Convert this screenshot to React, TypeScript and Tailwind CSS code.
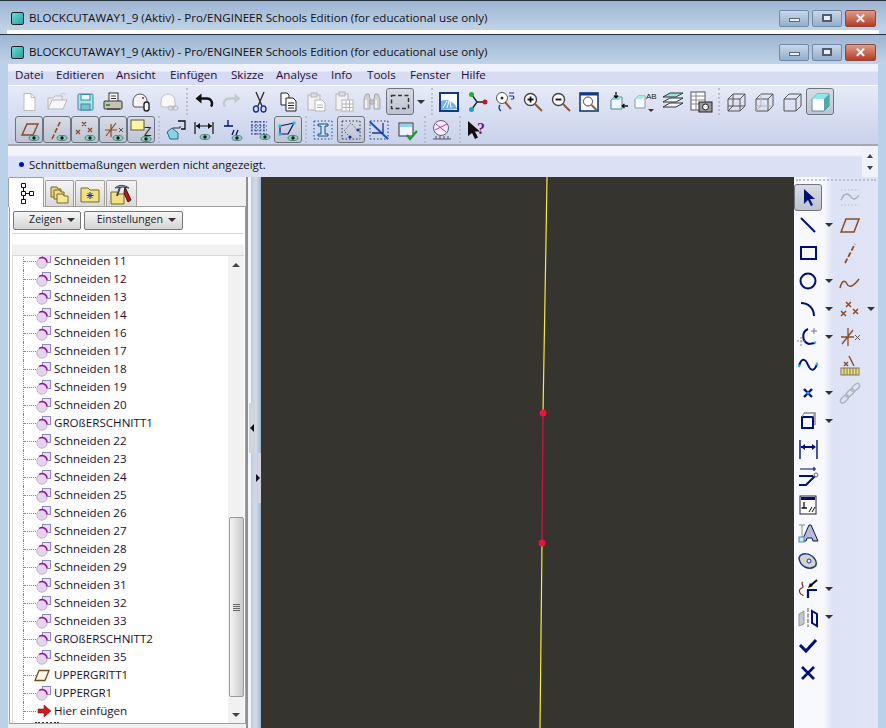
import React from 'react';

const BROWN = '#8a4b24';
const NAVY = '#00107a';

const Ic: React.FC<{ children: React.ReactNode; size?: number }> = ({ children, size = 24 }) => (
  <svg width={size} height={size} viewBox={`0 0 ${size} ${size}`} fill="none" className="block">
    {children}
  </svg>
);

const Eye = ({ x = 17, y = 20 }: { x?: number; y?: number }) => (
  <g>
    <ellipse cx={x} cy={y} rx={5} ry={2.6} fill="#8fcfc0" stroke="#1d5a50" strokeWidth={0.6} />
    <circle cx={x} cy={y} r={1.7} fill="#101a18" />
  </g>
);

const Btn: React.FC<{ children: React.ReactNode; on?: boolean }> = ({ children, on }) => (
  <div
    className={
      'flex h-[27px] w-[28px] shrink-0 items-center justify-center rounded-[3px] ' +
      (on ? 'border border-[#6d7480] bg-linear-to-b from-[#d9dce4] to-[#bcc3d2]' : '')
    }
  >
    {children}
  </div>
);

const Grip = () => (
  <div className="flex h-[27px] w-[7px] shrink-0 justify-center">
    <div className="h-full w-0 border-l-2 border-dotted border-[#b9bfcc]" />
  </div>
);

const Arrow = ({ className = '' }: { className?: string }) => (
  <div className={'h-0 w-0 border-x-[4px] border-t-[4px] border-x-transparent border-t-[#333] ' + className} />
);

/* top toolbar */
const row1a = [
  <Ic key="new"><path d="M7 3.5h7l4 4v13H7z" fill="#fff" stroke="#bdbdbd" /><path d="M14 3.5v4h4" stroke="#bdbdbd" /></Ic>,
  <Ic key="open"><path d="M3 19V8h5l2-2h7v4" fill="#eee" stroke="#b8b8b8" /><path d="M3 19l4-9h15l-4 9z" fill="#f7f7f7" stroke="#b8b8b8" /><path d="M15 5c2-2 4-2 6 0" stroke="#c8c8c8" /></Ic>,
  <Ic key="save"><rect x="5" y="4" width="15" height="16" rx="1" fill="#a9e4e8" stroke="#3d8a9c" /><rect x="8" y="4.5" width="9" height="5.5" fill="#e4f8f8" stroke="#3d8a9c" /><rect x="8" y="14" width="9" height="6" fill="#7cc5d0" stroke="#3d8a9c" /></Ic>,
  <Ic key="print"><rect x="8" y="3" width="9" height="9" fill="#fff" stroke="#333" /><path d="M10 6h5M10 8.5h5" stroke="#333" /><rect x="3" y="11" width="18" height="8" rx="1" fill="#c7c2b6" stroke="#333" /><rect x="5" y="14" width="4" height="2" fill="#27a12b" /><rect x="6" y="18" width="13" height="2" fill="#555" /></Ic>,
  <Ic key="mail"><path d="M4 11a7 7 0 0 1 14 0v6H6a2 2 0 0 1-2-2z" fill="#f4f4f4" stroke="#555" /><circle cx="14" cy="8" r="1" fill="#b02020" /><rect x="15" y="12" width="5" height="9" rx="2.5" fill="#fff" stroke="#222" strokeWidth="1.4" /></Ic>,
  <Ic key="link"><path d="M4 11a7 7 0 0 1 14 0v6H6a2 2 0 0 1-2-2z" fill="#f8f8f8" stroke="#c0c0c0" /><rect x="11" y="16" width="6" height="4" rx="2" stroke="#b8b8b8" /><rect x="15" y="16" width="6" height="4" rx="2" stroke="#b8b8b8" /></Ic>,
];

const row1b = [
  <Ic key="undo"><path d="M6 8.5h9a5 5 0 0 1 4 8" stroke="#111" strokeWidth="2.4" /><path d="M9.5 3.5L3.5 8.5l6 5z" fill="#111" /></Ic>,
  <Ic key="redo"><path d="M18 8.5H9a5 5 0 0 0-4 8" stroke="#c4c8cf" strokeWidth="2.4" /><path d="M14.5 3.5l6 5-6 5z" fill="#c4c8cf" /></Ic>,
  <Ic key="cut"><path d="M8 2l6 14M16 2l-6 14" stroke="#333" strokeWidth="1.4" /><ellipse cx="8" cy="19" rx="2.5" ry="3" stroke="#1b2f8f" strokeWidth="1.4" /><ellipse cx="15.5" cy="19" rx="2.5" ry="3" stroke="#1b2f8f" strokeWidth="1.4" /></Ic>,
  <Ic key="copy"><path d="M5 3h6l2 2v10H5z" fill="#fff" stroke="#222" /><path d="M10 8h7l3 3v10H10z" fill="#fff" stroke="#222" /><path d="M12 13h6M12 15.5h6M12 18h6" stroke="#222" /></Ic>,
  <Ic key="paste"><rect x="4" y="5" width="12" height="15" fill="#f2f2f2" stroke="#b5b5b5" /><rect x="7" y="3" width="6" height="4" fill="#ddd" stroke="#b5b5b5" /><path d="M11 10h7l3 3v8H11z" fill="#fff" stroke="#b5b5b5" /><path d="M13 15h6M13 17.5h6" stroke="#b5b5b5" /></Ic>,
  <Ic key="pastes"><rect x="4" y="4" width="12" height="16" fill="#f2f2f2" stroke="#b5b5b5" /><rect x="7" y="2" width="6" height="4" fill="#ddd" stroke="#b5b5b5" /><rect x="10" y="10" width="11" height="11" fill="#fff" stroke="#b5b5b5" /><path d="M10 14h11M10 17.5h11M14 10v11M17.5 10v11" stroke="#b5b5b5" /></Ic>,
  <Ic key="bino"><path d="M4 9l2-5h3l1 5v10H4zM14 9l1-5h3l2 5v10h-6z" fill="#d0d0d0" stroke="#a8a8a8" /><path d="M10 10h4v4h-4z" fill="#c8c8c8" stroke="#a8a8a8" /><path d="M6 10v8M16 10v8" stroke="#fff" strokeWidth="1.5" /></Ic>,
];

const row1c = [
  <Ic key="named"><rect x="3" y="3" width="18" height="18" fill="#fff" stroke="#123a80" strokeWidth="2" /><path d="M4 20V11a12 12 0 0 1 16 8z" fill="#6fb4e8" /><path d="M6 18l4-7M10 18l2-7M14 18l-1-7" stroke="#fff" /></Ic>,
  <Ic key="axes"><path d="M12 12L7 5M12 12L7 19M12 12h8" stroke="#222" strokeWidth="1.3" /><circle cx="6.5" cy="4.5" r="2.5" fill="#20b030" /><circle cx="6.5" cy="19.5" r="2.5" fill="#20a0c8" /><circle cx="20" cy="12" r="2.5" fill="#b81c2c" /></Ic>,
  <Ic key="spin"><circle cx="9" cy="8" r="5.5" fill="#fff" stroke="#555" /><circle cx="9" cy="8" r="1.5" fill="#333" /><path d="M12 12l6 7" stroke="#8a5a30" strokeWidth="2" /><path d="M16 3h5M16 6h4c1 0 1 3 0 3h-2" stroke="#1c3aa0" strokeWidth="1.2" /><path d="M7 15a4 4 0 0 0 1 6" stroke="#1c3aa0" strokeWidth="1.4" /></Ic>,
  <Ic key="zin"><circle cx="9.5" cy="9.5" r="6" fill="#fff" stroke="#444" strokeWidth="1.4" /><path d="M6.5 9.5h6M9.5 6.5v6" stroke="#111" strokeWidth="1.8" /><path d="M14 14l7 7" stroke="#8a5a30" strokeWidth="2" /></Ic>,
  <Ic key="zout"><circle cx="9.5" cy="9.5" r="6" fill="#fff" stroke="#444" strokeWidth="1.4" /><path d="M6.5 9.5h6" stroke="#111" strokeWidth="1.8" /><path d="M14 14l7 7" stroke="#8a5a30" strokeWidth="2" /></Ic>,
  <Ic key="refit"><rect x="3" y="3" width="18" height="18" fill="#fff" stroke="#123a80" strokeWidth="1.6" /><rect x="3" y="3" width="18" height="2.5" fill="#123a80" /><circle cx="11" cy="11.5" r="4.5" fill="#fff" stroke="#444" /><path d="M14.5 15l5 5" stroke="#8a5a30" strokeWidth="2" /></Ic>,
  <Ic key="orient"><path d="M6 10l3-3h8v12H6z" fill="#eef8fb" stroke="#5b7f8a" /><path d="M6 10l3-3h8l-3 3z" fill="#7fe0e0" /><path d="M11 2v6M11 8l-2-2.5M11 8l2-2.5M23 16h-6M17 16l2.5-2M17 16l2.5 2" stroke="#111" strokeWidth="1.3" /></Ic>,
  <Ic key="views"><path d="M2 9l3-3h7v12H2z" fill="#f2fafb" stroke="#8a9aa0" /><path d="M2 9l3-3h7l-3 3z" fill="#a4ecec" /><text x="13" y="9" fontSize="8" fill="#222" fontFamily="Liberation Sans, sans-serif">AB</text><path d="M15 19h6l-3 3z" fill="#333" /></Ic>,
  <Ic key="layers"><path d="M2 7l7-4h13l-7 4z" fill="#8ee8e0" stroke="#333" /><path d="M2 12l7-4h13l-7 4z" fill="#f4fafa" stroke="#333" /><path d="M2 17l7-4h13l-7 4z" fill="#f4fafa" stroke="#333" /></Ic>,
  <Ic key="cam"><rect x="2" y="2" width="14" height="18" fill="#fff" stroke="#555" /><path d="M2 6h14M2 10h14M2 14h14M7 2v18" stroke="#888" /><rect x="10" y="12" width="13" height="10" fill="#999" stroke="#222" /><circle cx="16.5" cy="17" r="3" fill="#eee" stroke="#222" /></Ic>,
];

const Cube = ({ mode }: { mode: 'wire' | 'hidden' | 'nohidden' | 'shade' }) => (
  <Ic>
    {mode === 'shade' ? (
      <>
        <path d="M4 9l5-5h12v12l-5 5H4z" fill="#fff" stroke="#5c8c98" />
        <path d="M4 9l5-5h12l-5 5z" fill="#8ce8ea" />
        <path d="M16 9l5-5v12l-5 5z" fill="#4fa9a4" />
      </>
    ) : (
      <>
        <path d="M4 9l5-5h12v12l-5 5H4zM4 9h12v12M16 9l5-5" stroke="#555" />
        {mode !== 'nohidden' && (
          <path d="M9 4v12H4M9 16h12M9 16l-5 5" stroke={mode === 'wire' ? '#555' : '#b5b5b5'} />
        )}
      </>
    )}
  </Ic>
);

/* sketcher row of the top toolbar */
const row2a = [
  <Ic key="pl"><path d="M5 17l5-11h11l-5 11z" stroke={BROWN} strokeWidth="1.4" /><Eye /></Ic>,
  <Ic key="ax"><path d="M7 21L15 4" stroke={BROWN} strokeWidth="1.6" strokeDasharray="5 2" /><Eye /></Ic>,
  <Ic key="pt"><path d="M9 4l4 4M13 4l-4 4M3 12l4 4M7 12l-4 4M15 10l4 4M19 10l-4 4" stroke={BROWN} strokeWidth="1.3" /><Eye /></Ic>,
  <Ic key="cs"><path d="M4 12h12M10 6v13M5 18l10-13" stroke={BROWN} strokeWidth="1.2" /><path d="M18 10l4 4M22 10l-4 4" stroke="#555" /><Eye /></Ic>,
  <Ic key="note"><rect x="2" y="2" width="13" height="10" fill="#fff59c" stroke="#555" /><text x="15" y="18" fontSize="12" fill="#222" fontFamily="Liberation Sans, sans-serif">Z</text><Eye y={21} /></Ic>,
];

const row2b = [
  <Ic key="rel"><path d="M4 14l5-4h7v-2" stroke="#333" /><path d="M14 3h7v8h-4" stroke="#111" strokeWidth="1.3" /><path d="M3 14l5-4 6 5v6H6z" fill="#8ad2e4" stroke="#28688a" /></Ic>,
  <Ic key="dim"><path d="M3 4v12M21 4v12M4 8h16" stroke="#111" strokeWidth="1.2" /><path d="M4 8l4-3v6zM20 8l-4-3v6z" fill="#111" /><Eye x={13} y={19} /></Ic>,
  <Ic key="con"><path d="M4 8h9M8 2v6" stroke={NAVY} strokeWidth="1.3" /><path d="M12 17l2-5M16 17l2-5" stroke={NAVY} strokeWidth="1.3" /><Eye x={17} y={20} /></Ic>,
  <Ic key="grid"><path d="M3 4h16M3 8h16M3 12h16M3 16h16M4 3v15M8 3v15M12 3v15M16 3v15" stroke="#1c3a88" strokeWidth="1.2" strokeDasharray="1.5 1.5" /><Eye x={17} y={19} /></Ic>,
  <Ic key="vert"><path d="M4 8l14-3-6 11H4z" stroke={NAVY} strokeWidth="1.2" /><path d="M2.5 6.5h3v3h-3zM16.5 3.5h3v3h-3zM2.5 14.5h3v3h-3z" fill="#22b8e8" /><Eye x={17} y={20} /></Ic>,
];

const dotBox = 'M3 3h18M3 21h18M3 3v18M21 3v18';

const row2c = [
  <Ic key="i"><path d={dotBox} stroke="#1c4a98" strokeDasharray="1.5 2" /><path d="M7 6h10v2h-3v8h3v2H7v-2h3V8H7z" fill="#c9e4f4" stroke="#1b4a80" /></Ic>,
  <Ic key="shp"><path d={dotBox} stroke="#1c3a88" strokeDasharray="1.5 2" /><path d="M5 13l7-8 7 8M6 14l6 6" stroke="#667" strokeDasharray="1.5 1.5" /><circle cx="19" cy="12" r="1.6" fill="#1c3a98" /><circle cx="11" cy="19" r="1.6" fill="#1c3a98" /></Ic>,
  <Ic key="ovl"><path d={dotBox} stroke="#1c3a88" strokeDasharray="1.5 2" /><path d="M3 4l18 17" stroke="#1a4fc0" strokeWidth="2" /><path d="M5 15h11V5" stroke="#1c3a88" strokeWidth="1.3" /></Ic>,
  <Ic key="chk"><rect x="4" y="5" width="14" height="13" fill="#eef6fb" stroke="#333" /><rect x="5" y="6" width="12" height="3" fill="#8fd4e6" /><path d="M12 17l3 4 7-8" stroke="#1c9a2c" strokeWidth="2.2" /></Ic>,
];

const section = (
  <Ic>
    <circle cx="11" cy="10" r="7.5" fill="#f7eef9" stroke="#5c5c80" />
    <path d="M6 6l10 8M5 12l12-6" stroke="#c030b0" />
    <path d="M3 21h18M6 18v3M10 18v3M14 18v3M18 18v3" stroke="#555" />
  </Ic>
);

const whatsThis = (
  <svg width="24" height="24" viewBox="0 0 24 24" className="block">
    <path d="M3 3v15l4-3 3 6 3-1.5-3-6h5z" fill="#111" />
    <text x="12" y="16" fontSize="16" fontWeight="700" fill="#7a1080" fontFamily="Liberation Serif, serif">?</text>
  </svg>
);

/* right sketch toolbar, first column */
const rightTools: { icon: React.ReactNode; on?: boolean; drop?: boolean }[] = [
  { icon: <Ic><path d="M8 4v15l4-4 3 6 2-1-3-6h5z" fill={NAVY} /></Ic>, on: true },
  { icon: <Ic><path d="M5 5l14 14" stroke={NAVY} strokeWidth="2" /></Ic>, drop: true },
  { icon: <Ic><rect x="5" y="6" width="15" height="12" stroke={NAVY} strokeWidth="2" /></Ic> },
  { icon: <Ic><circle cx="12" cy="12" r="7.5" stroke={NAVY} strokeWidth="2" /></Ic>, drop: true },
  { icon: <Ic><path d="M5 6c7 0 13 5 13 13" stroke={NAVY} strokeWidth="2" /></Ic>, drop: true },
  { icon: <Ic><path d="M12 4a8 8 0 0 0 1 15l6-1" stroke={NAVY} strokeWidth="2" /><path d="M18 3v6M15 6h6" stroke="#777" /><path d="M1 16h8M5 12v9" stroke="#888" strokeDasharray="2 1.5" /><circle cx="19" cy="17.5" r="1.3" fill="#18c8e8" /></Ic>, drop: true },
  { icon: <Ic><path d="M3 13c3-10 7-6 9-1s6 8 9-1" stroke={NAVY} strokeWidth="2" /><circle cx="3" cy="13" r="1.4" fill="#18c8e8" /><circle cx="21" cy="11" r="1.4" fill="#18c8e8" /></Ic> },
  { icon: <Ic><path d="M8 8l8 8M16 8l-8 8" stroke={NAVY} strokeWidth="2.4" /><circle cx="12" cy="12" r="1.6" fill="#18a8e8" /></Ic>, drop: true },
  { icon: <Ic><path d="M8 4h11v12" stroke="#888" strokeWidth="1.4" /><path d="M6 8h11v11H6z" stroke={NAVY} strokeWidth="2" fill="#f8f9fd" /><path d="M6 8l2-4M17 8l2-4" stroke="#888" /></Ic>, drop: true },
  { icon: <Ic><path d="M4 3v19M21 3v19" stroke={NAVY} strokeWidth="1.4" /><path d="M5 10h14" stroke={NAVY} strokeWidth="2" /><path d="M5 10l4-3v6zM20 10l-4-3v6z" fill={NAVY} /></Ic> },
  { icon: <Ic><path d="M4 4h16M18 2v4" stroke={NAVY} strokeWidth="1.2" /><path d="M3 11h14" stroke={NAVY} strokeWidth="2" /><path d="M3 20h7l9-9" stroke={NAVY} strokeWidth="2" /><circle cx="20" cy="10" r="2" stroke="#666" /></Ic> },
  { icon: <Ic><rect x="4" y="3" width="16" height="18" fill="#fff" stroke="#223" /><rect x="5" y="4" width="14" height="3" fill={NAVY} /><path d="M8 9v6M5.5 15H11" stroke="#111" strokeWidth="1.3" /><path d="M13 19l3-5M16 19l3-5" stroke="#111" /></Ic> },
  { icon: <Ic><path d="M3 4h6M6 4v12" stroke="#889" /><path d="M6 20L13 4h2l7 16h-5l-1-3h-5l-1 3z" fill="#b8bccc" stroke={NAVY} /><rect x="3" y="16" width="5" height="5" fill="#cfe8f4" stroke="#4a8ab8" /></Ic> },
  { icon: <Ic><path d="M3 9c2-6 11-5 15 0 3 3 3 8 0 9-5 3-14 0-15-9z" fill="#d4d4cc" stroke="#1c3a88" strokeWidth="1.5" /><circle cx="13" cy="12" r="2" fill="#eee" stroke="#1c3a88" /></Ic> },
  { icon: <Ic><path d="M7 5c-3 1 2 5-1 6s-3 3-2 5 3 1 3 3" stroke="#8a2a20" strokeWidth="1.2" /><path d="M12 21v-8h9" stroke={NAVY} strokeWidth="2.2" /><path d="M21 3l-7 6" stroke="#111" strokeWidth="2" /><path d="M12 11l5-2-3-3z" fill="#111" /></Ic>, drop: true },
  { icon: <Ic><path d="M3 9l5-3v13l-5 2z" fill="#c4c8cc" stroke="#999" /><path d="M12 3v19" stroke="#555" strokeDasharray="4 1.5" /><path d="M16 6l5 3v12l-5-3z" stroke={NAVY} strokeWidth="2" /></Ic>, drop: true },
  { icon: <Ic><path d="M4 12l6 6L20 7" stroke={NAVY} strokeWidth="3" /></Ic> },
  { icon: <Ic><path d="M6 6l12 12M18 6L6 18" stroke={NAVY} strokeWidth="2.6" /></Ic> },
];

/* right sketch toolbar, second column */
const rightTools2: { icon: React.ReactNode; drop?: boolean }[] = [
  { icon: <Ic><path d="M3 5h18M3 20h18" stroke="#b8bcc4" strokeDasharray="1.5 2" /><path d="M3 15c4-9 8-6 10-3s5 3 8-2" stroke="#a8acb4" strokeWidth="1.3" /></Ic> },
  { icon: <Ic><path d="M3 19L8 6h13l-5 13z" stroke={BROWN} strokeWidth="1.5" /></Ic> },
  { icon: <Ic><path d="M7 22L17 3" stroke={BROWN} strokeWidth="1.8" strokeDasharray="5 2" /></Ic> },
  { icon: <Ic><path d="M2 19c2-8 5-8 7-4s6 3 12-5" stroke={BROWN} strokeWidth="1.5" /></Ic> },
  { icon: <Ic><path d="M8 5l5 5M13 5l-5 5M3 14l5 5M8 14l-5 5M15 12l5 5M20 12l-5 5" stroke={BROWN} strokeWidth="1.5" /></Ic>, drop: true },
  { icon: <Ic><path d="M3 12h13M10 3v18M4 19L15 5" stroke={BROWN} strokeWidth="1.3" /><path d="M17 10l5 5M22 10l-5 5" stroke="#555" /></Ic> },
  { icon: <Ic><path d="M6 9l4 4M10 9l-4 4M11 3l5 10" stroke={BROWN} strokeWidth="1.4" /><rect x="3" y="15" width="18" height="7" fill="#f4e068" stroke="#777" /><path d="M6 15v7M9 15v7M12 15v7M15 15v7M18 15v7" stroke="#777" /></Ic> },
  { icon: <Ic><g stroke="#b0b4bc" strokeWidth="1.5"><ellipse cx="6.5" cy="18" rx="5" ry="2.6" transform="rotate(-45 6.5 18)" /><ellipse cx="12" cy="12" rx="5" ry="2.6" transform="rotate(-45 12 12)" /><ellipse cx="17.5" cy="6.5" rx="5" ry="2.6" transform="rotate(-45 17.5 6.5)" /></g></Ic> },
];

const RightRow: React.FC<{ children: React.ReactNode; on?: boolean; drop?: boolean }> = ({ children, on, drop }) => (
  <div className="flex h-[28px] items-center">
    <Btn on={on}>{children}</Btn>
    <div className="flex w-[14px] justify-center">{drop && <Arrow />}</div>
  </div>
);

const CutIcon = () => (
  <svg width="16" height="16" viewBox="0 0 16 16" fill="none" className="block shrink-0">
    <rect x="6.5" y="1.5" width="8" height="8" fill="#e6e2f4" stroke="#8f88c4" />
    <circle cx="6" cy="10" r="5.2" fill="#e4d4ee" stroke="#c4b0d8" />
    <path d="M3 5.5a5 5 0 0 1 8 4" stroke="#a010a0" strokeWidth="1.5" />
  </svg>
);

type TreeItem = { label: string; kind?: 'cut' | 'plane' | 'insert' };

const names: TreeItem[] = [
  ...[11, 12, 13, 14, 16, 17, 18, 19, 20].map((n) => ({ label: `Schneiden ${n}` })),
  { label: 'GROßERSCHNITT1' },
  ...[22, 23, 24, 25, 26, 27, 28, 29, 31, 32, 33].map((n) => ({ label: `Schneiden ${n}` })),
  { label: 'GROßERSCHNITT2' },
  { label: 'Schneiden 35' },
  { label: 'UPPERGRITT1', kind: 'plane' },
  { label: 'UPPERGR1' },
  { label: 'Hier einfügen', kind: 'insert' },
];

const TreeRow = ({ item }: { item: TreeItem }) => (
  <div className="ml-[10px] flex h-[18px] items-center border-l border-dotted border-[#888]">
    <div className="w-[12px] border-t border-dotted border-[#888]" />
    {item.kind === 'plane' ? (
      <svg width="16" height="16" viewBox="0 0 16 16" fill="none" className="block shrink-0 -ml-[2px] mr-[2px]">
        <path d="M1 13.5L5 3.5h10l-4 10z" fill="#fffbe8" stroke="#7a4a20" strokeWidth="1.3" />
      </svg>
    ) : item.kind === 'insert' ? (
      <svg width="16" height="16" viewBox="0 0 16 16" className="block shrink-0">
        <path d="M2 6h6V2l7 6-7 6v-4H2z" fill="#d81818" stroke="#501010" strokeWidth="0.5" />
      </svg>
    ) : (
      <CutIcon />
    )}
    <span className="ml-[2px] whitespace-nowrap text-[11.6px] leading-[10px] text-[#1a1030]">{item.label}</span>
  </div>
);

const WinButtons = () => (
  <div className="flex gap-[3px]">
    <div className="flex h-[17px] w-[30px] items-center justify-center rounded-[2px] border border-[#6f8aa8] bg-linear-to-b from-[#c8d8ea] to-[#93aecb]">
      <div className="mt-[3px] h-[4px] w-[11px] border border-[#5a6878] bg-[#e8eef4]" />
    </div>
    <div className="flex h-[17px] w-[30px] items-center justify-center rounded-[2px] border border-[#6f8aa8] bg-linear-to-b from-[#c8d8ea] to-[#93aecb]">
      <div className="h-[8px] w-[10px] border-2 border-[#4e5c6c] bg-[#e8eef4]" />
    </div>
    <div className="flex h-[17px] w-[31px] items-center justify-center rounded-[2px] border border-[#8a4a40] bg-linear-to-b from-[#dd9a88] to-[#b53a24]">
      <span className="text-[13px] leading-none font-bold text-white">✕</span>
    </div>
  </div>
);

const TitleText = () => (
  <>
    <div className="mr-[5px] ml-[11px] h-[13px] w-[13px] rounded-[2px] border border-[#222] bg-linear-to-br from-[#62dcd4] to-[#2f9f9a]" />
    <span className="flex-1 text-[11.6px] whitespace-nowrap text-[#111]">
      BLOCKCUTAWAY1_9 (Aktiv) - Pro/ENGINEER Schools Edition (for educational use only)
    </span>
    <div className="mr-[10px]">
      <WinButtons />
    </div>
  </>
);

const menus = [
  ['Datei', 'w-[41px]'],
  ['Editieren', 'w-[60px]'],
  ['Ansicht', 'w-[54px]'],
  ['Einfügen', 'w-[61px]'],
  ['Skizze', 'w-[45px]'],
  ['Analyse', 'w-[55px]'],
  ['Info', 'w-[36px]'],
  ['Tools', 'w-[43px]'],
  ['Fenster', 'w-[51px]'],
  ['Hilfe', 'w-[40px]'],
];

const FolderTab: React.FC<{ children: React.ReactNode; w: string }> = ({ children, w }) => (
  <div className={'mt-[3px] flex h-[26px] items-center justify-center rounded-t-[2px] border border-b-0 border-[#a0a0a0] bg-linear-to-b from-[#f4f4f4] to-[#d8d8d8] ' + w}>
    {children}
  </div>
);

const App: React.FC = () => {
  return (
    <div className="h-[728px] w-[886px] overflow-hidden bg-[#b9d2ea] font-['Open_Sans','Noto_Sans',sans-serif]">
      {/* window behind */}
      <div className="h-[35px] border-t border-b border-[#26303a] bg-[#b9d2ea]">
        <div className="flex h-[29px] items-center bg-linear-to-b from-[#9db5d2] to-[#c0d3e8] pt-[5px]">
          <TitleText />
        </div>
        <div className="mx-[7px] h-[4px] bg-white" />
      </div>

      {/* front window */}
      <div className="flex h-[693px] flex-col">
        <div className="flex h-[29px] shrink-0 items-center bg-linear-to-b from-[#9db5d2] to-[#c0d3e8] pt-[5px]">
          <TitleText />
        </div>

        <div className="mx-[8px] flex min-h-0 flex-1 flex-col">
          {/* menu bar */}
          <div className="flex h-[21px] shrink-0 items-center bg-[linear-gradient(#eef1fb_0,#eef1fb_7px,#d6dcf1_8px,#d6dcf1_100%)] pl-[7px] text-[11.6px] text-[#1f1040]">
            {menus.map(([m, w]) => (
              <span key={m} className={w}>
                {m}
              </span>
            ))}
          </div>

          {/* toolbars */}
          <div className="flex h-[59px] shrink-0 flex-col gap-[1px] border-t border-white bg-linear-to-b from-[#e6eaf8] to-[#c8d2ea] pt-[2px] pl-[7px]">
            <div className="flex items-center">
              {row1a.map((ic, i) => (
                <Btn key={i}>{ic}</Btn>
              ))}
              <Grip />
              {row1b.map((ic, i) => (
                <Btn key={i}>{ic}</Btn>
              ))}
              <Btn on>
                <Ic><rect x="3.5" y="5.5" width="17" height="13" stroke="#333" strokeWidth="1.5" strokeDasharray="4 2.5" /></Ic>
              </Btn>
              <div className="flex w-[14px] justify-center">
                <Arrow />
              </div>
              <Grip />
              {row1c.map((ic, i) => (
                <Btn key={i}>{ic}</Btn>
              ))}
              <Grip />
              <Btn><Cube mode="wire" /></Btn>
              <Btn><Cube mode="hidden" /></Btn>
              <Btn><Cube mode="nohidden" /></Btn>
              <Btn on><Cube mode="shade" /></Btn>
            </div>
            <div className="flex items-center">
              {row2a.map((ic, i) => (
                <Btn key={i} on>{ic}</Btn>
              ))}
              <Grip />
              {row2b.map((ic, i) => (
                <Btn key={i} on={i === 4}>{ic}</Btn>
              ))}
              <Grip />
              {row2c.map((ic, i) => (
                <Btn key={i} on={i === 1}>{ic}</Btn>
              ))}
              <Grip />
              <Btn>{section}</Btn>
              <Grip />
              <Btn>{whatsThis}</Btn>
            </div>
          </div>

          {/* message area */}
          <div className="flex h-[33px] shrink-0 border-t-2 border-[#a4a8b0] bg-[linear-gradient(#f2f4fc_0,#f2f4fc_9px,#dae1f4_11px,#dae1f4_100%)]">
            <div className="flex flex-1 items-center pt-[6px] pl-[11px] text-[11.4px] text-[#111]">
              <div className="mr-[5px] h-[5px] w-[5px] rounded-full bg-[#0010c0]" />
              Schnittbemaßungen werden nicht angezeigt.
            </div>
            <div className="flex w-[16px] flex-col items-center justify-center gap-[8px] bg-[#f0f2fa]">
              <div className="h-0 w-0 border-x-[3px] border-b-[4px] border-x-transparent border-b-[#444]" />
              <div className="h-0 w-0 border-x-[3px] border-t-[4px] border-x-transparent border-t-[#444]" />
            </div>
          </div>

          {/* work area */}
          <div className="flex min-h-0 flex-1">
            {/* model tree panel */}
            <div className="flex w-[238px] shrink-0 flex-col bg-[#f0f0f0] pb-[4px]">
              <div className="flex h-[30px] shrink-0 gap-[1px]">
                <div className="z-10 flex h-[30px] w-[36px] items-center justify-center rounded-t-[2px] border border-b-0 border-[#a0a0a0] bg-white">
                  <svg width="18" height="22" viewBox="0 0 18 22" fill="none" stroke="#111">
                    <path d="M4.5 1.5h4v4h-4zM4.5 9.5h4v4h-4zM4.5 17.5h4v4h-4zM12.5 9.5h4v4h-4zM6.5 5.5v4M6.5 13.5v4M8.5 11.5h4" />
                  </svg>
                </div>
                <FolderTab w="w-[29px]">
                  <svg width="20" height="20" viewBox="0 0 20 20" stroke="#7a6a20">
                    <path d="M1 3h6l1 2h3v8H1z" fill="#e8d47a" />
                    <path d="M4 6h6l1 2h3v7H4z" fill="#eedd88" />
                    <path d="M7 10h6l1 2h4v7H7z" fill="#f4e898" />
                  </svg>
                </FolderTab>
                <FolderTab w="w-[30px]">
                  <svg width="20" height="18" viewBox="0 0 20 18" stroke="#7a6a20">
                    <path d="M1 3h7l2 2h9v12H1z" fill="#f2e084" />
                    <path d="M10 7v7M6.5 10.5h7M7.5 8l5 5M12.5 8l-5 5" stroke="#1028c0" />
                  </svg>
                </FolderTab>
                <FolderTab w="w-[31px]">
                  <svg width="24" height="22" viewBox="0 0 24 22" stroke="#7a6a20">
                    <path d="M1 9h6l1 2h6v10H1z" fill="#f2e084" />
                    <path d="M5 5c4-4 10-3 14 0l-6-1z" fill="#9fb0c8" stroke="#445" />
                    <path d="M10 4l-3 9" stroke="#445" strokeWidth="2" />
                    <path d="M15 4l6 13-3 2-4-9z" fill="#a81c1c" stroke="#501010" />
                  </svg>
                </FolderTab>
              </div>
              <div className="-mt-px ml-px flex min-h-0 flex-1 flex-col border border-[#a0a0a0] bg-white pr-px pl-[2px]">
                <div className="flex h-[26px] shrink-0 items-center gap-[3px] pl-[1px]">
                  <div className="flex h-[19px] w-[68px] items-center justify-end gap-[5px] rounded-[2px] border border-[#777] bg-linear-to-b from-[#f6f6f6] to-[#d4d4d4] pr-[5px] text-[10.6px] text-[#222]">
                    Zeigen <Arrow />
                  </div>
                  <div className="flex h-[19px] w-[99px] items-center justify-end gap-[5px] rounded-[2px] border border-[#777] bg-linear-to-b from-[#f6f6f6] to-[#d4d4d4] pr-[6px] text-[10.6px] text-[#222]">
                    Einstellungen <Arrow />
                  </div>
                </div>
                <div className="h-[22px] shrink-0 border-t border-[#d8d8d8] bg-[linear-gradient(#fff_0,#fff_45%,#f0f0f0_55%,#f0f0f0_100%)]" />
                <div className="flex min-h-0 flex-1 border-t border-l border-[#d8d8d8]">
                  <div className="min-w-0 flex-1 overflow-hidden">
                    <div className="-mt-[4px]">
                      {names.map((item) => (
                        <TreeRow key={item.label} item={item} />
                      ))}
                      <div className="mt-[2px] ml-[22px] w-[24px] border-t-2 border-dotted border-[#333]" />
                    </div>
                  </div>
                  {/* tree scrollbar */}
                  <div className="flex w-[16px] shrink-0 flex-col items-center bg-[#f1f1f1]">
                    <div className="flex h-[17px] items-center justify-center">
                      <div className="h-0 w-0 border-x-[4px] border-b-[4px] border-x-transparent border-b-[#444]" />
                    </div>
                    <div className="flex-1" />
                    <div className="flex h-[180px] w-[15px] shrink-0 flex-col items-center justify-center gap-[1px] rounded-[2px] border border-[#9a9a9a] bg-linear-to-r from-[#f4f4f4] to-[#c8c8c8]">
                      <div className="h-px w-[7px] bg-[#666]" />
                      <div className="h-px w-[7px] bg-[#666]" />
                      <div className="h-px w-[7px] bg-[#666]" />
                      <div className="h-px w-[7px] bg-[#666]" />
                    </div>
                    <div className="flex h-[26px] shrink-0 items-end justify-center pb-[6px]">
                      <div className="h-0 w-0 border-x-[4px] border-t-[4px] border-x-transparent border-t-[#444]" />
                    </div>
                  </div>
                </div>
              </div>
            </div>

            {/* sash between tree and graphics */}
            <div className="relative w-[15px] shrink-0 bg-[linear-gradient(90deg,#8a9098_0,#8a9098_2px,#f4f6fa_2px,#f4f6fa_5px,#b8cde4_5px,#d4dce8_10px,#9fb4c9_15px)]">
              <div className="absolute top-[226px] left-[3px] flex h-[50px] w-[6px] items-center justify-center bg-[#d0d5dd]">
                <div className="h-0 w-0 border-y-[4px] border-r-[4px] border-y-transparent border-r-[#111]" />
              </div>
              <div className="absolute top-[276px] left-[9px] flex h-[50px] w-[6px] items-center justify-center bg-[#d0d5dd]">
                <div className="h-0 w-0 border-y-[4px] border-l-[4px] border-y-transparent border-l-[#111]" />
              </div>
            </div>

            {/* graphics window */}
            <div className="min-w-0 flex-1 bg-[#35342e]">
              <svg width="533" height="551" viewBox="0 0 533 551" fill="none" className="block">
                <path d="M286 0L285 63L282 236" stroke="#f4ee3a" strokeWidth="1.2" />
                <path d="M282 236L281 366" stroke="#c8143c" strokeWidth="1.4" />
                <path d="M281 366L279 551" stroke="#f4ee3a" strokeWidth="1.2" />
                <circle cx="282" cy="236" r="3.5" fill="#f0103c" />
                <circle cx="281" cy="366" r="3.5" fill="#f0103c" />
              </svg>
            </div>

            {/* sketcher toolbar */}
            <div className="flex w-[84px] shrink-0 flex-col bg-[linear-gradient(90deg,#f7f9fe_0,#f7f9fe_30px,#dde3f5_38px,#dfe5f6_100%)]">
              <div className="mx-[2px] mt-[2px] h-[2px] shrink-0 border-t-2 border-dotted border-[#b9bfcc]" />
              <div className="mt-[2px] flex">
                <div className="flex flex-col">
                  {rightTools.map((t, i) => (
                    <RightRow key={i} on={t.on} drop={t.drop}>{t.icon}</RightRow>
                  ))}
                </div>
                <div className="flex flex-col">
                  {rightTools2.map((t, i) => (
                    <RightRow key={i} drop={t.drop}>{t.icon}</RightRow>
                  ))}
                </div>
              </div>
            </div>
          </div>
        </div>
      </div>
    </div>
  );
};

export default App;
